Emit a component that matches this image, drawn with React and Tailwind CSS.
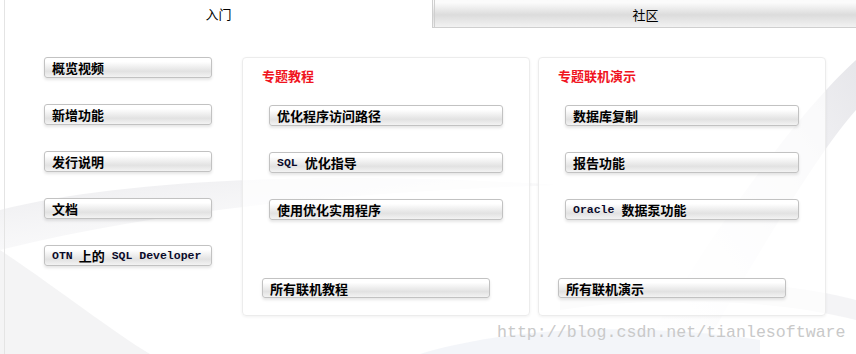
const cjk = 'font-["Noto_Sans_CJK_SC","Noto_Sans",sans-serif]';

const Latin = ({ children }) => (
  <span className='font-["Liberation_Mono",monospace] text-[11.5px] font-bold text-[#0a0a2a]'>{children}</span>
);

const Btn = ({ children, className = "" }) => (
  <div
    className={`flex h-[21px] items-center rounded-[3px] border border-[#c2c2c2] bg-linear-to-b from-white from-20% via-[#e2e2e2] via-70% to-[#f3f3f3] pl-[7px] text-[13px] leading-none font-bold text-black shadow-[0_2px_3px_rgba(0,0,0,0.10)] ${cjk} ${className}`}
  >
    {children}
  </div>
);

const Panel = ({ title, items, footer, footerX }) => (
  <div className="flex h-[259px] w-[288px] flex-col rounded-[4px] border border-[#ececec] bg-white/70 pt-[8px] pb-[17px] shadow-[0_1px_3px_rgba(0,0,0,0.06)]">
    <div className={`ml-[19px] h-[20px] text-[13px] leading-[20px] font-bold text-[#f0141e] ${cjk}`}>{title}</div>
    <div className="mt-[19px] ml-[26px] flex w-[234px] flex-col gap-[26px]">
      {items.map((it, i) => (
        <Btn key={i}>{it}</Btn>
      ))}
    </div>
    <Btn className={`mt-auto ml-[19px] w-[228px] !h-[20px] ${footerX}`}>{footer}</Btn>
  </div>
);

export default function App() {
  const left = [
    "概览视频",
    "新增功能",
    "发行说明",
    "文档",
    <>
      <Latin>OTN</Latin>
      <span className="ml-[6px]">上的</span>
      <Latin>&nbsp;SQL Developer</Latin>
    </>,
  ];

  return (
    <div className="relative h-[354px] w-[856px] overflow-hidden bg-white pl-[4px]">
      <svg className="absolute inset-0" width="856" height="354" viewBox="0 0 856 354">
        <defs>
          <linearGradient id="g1" x1="0" y1="0" x2="1" y2="1">
            <stop offset="0" stopColor="#e9e9ec" stopOpacity="0.9" />
            <stop offset="1" stopColor="#f7f7f9" stopOpacity="0" />
          </linearGradient>
          <linearGradient id="g2" x1="1" y1="0" x2="0" y2="1">
            <stop offset="0" stopColor="#e6e6ea" />
            <stop offset="1" stopColor="#f8f8fa" stopOpacity="0" />
          </linearGradient>
        </defs>
        <path d="M0 210 C120 180 320 170 560 185 C420 190 200 200 0 250 Z" fill="url(#g1)" />
        <path d="M0 250 C60 290 110 330 150 354 L0 354 Z" fill="#f1f1f3" opacity="0.8" />
        <path d="M856 60 C790 120 700 250 640 354 L700 354 C760 250 820 150 856 110 Z" fill="url(#g2)" />
        <path d="M560 300 C680 270 800 285 856 300 L856 320 C780 300 660 295 560 310 Z" fill="#ececf0" opacity="0.6" />
        <path d="M420 354 C500 330 620 320 760 340 L760 354 Z" fill="#eef1f6" opacity="0.7" />
      </svg>

      <div className="relative flex h-full flex-col border-l border-[#e4e4e4]">
        <div className="flex h-[28px]">
          <div className={`flex w-[427px] items-center justify-center pb-[1px] text-[13px] text-black ${cjk}`}>入门</div>
          <div
            className={`flex flex-1 items-center justify-center border-b border-l-[3px] border-double border-[#cfcfcf] bg-linear-to-b from-[#fbfbfb] from-10% via-[#dcdcdc] via-55% to-[#f2f2f2] pt-[2px] text-[13px] text-black ${cjk}`}
          >
            社区
          </div>
        </div>

        <div className="flex pt-[29px] pl-[39px]">
          <div className="flex w-[168px] flex-col gap-[26px]">
            {left.map((it, i) => (
              <Btn key={i}>{it}</Btn>
            ))}
          </div>

          <div className="ml-[30px] flex gap-[8px]">
            <Panel
              title="专题教程"
              items={[
                "优化程序访问路径",
                <>
                  <Latin>SQL</Latin>
                  <span className="ml-[7px]">优化指导</span>
                </>,
                "使用优化实用程序",
              ]}
              footer="所有联机教程"
            />
            <Panel
              title="专题联机演示"
              items={[
                "数据库复制",
                "报告功能",
                <>
                  <Latin>Oracle</Latin>
                  <span className="ml-[7px]">数据泵功能</span>
                </>,
              ]}
              footer="所有联机演示"
            />
          </div>
        </div>
      </div>

      <div className='absolute top-[322px] left-[497px] font-["Liberation_Mono",monospace] text-[16.6px] leading-[22px] text-[#c9c9c9]'>
        http://blog.csdn.net/tianlesoftware
      </div>
    </div>
  );
}
